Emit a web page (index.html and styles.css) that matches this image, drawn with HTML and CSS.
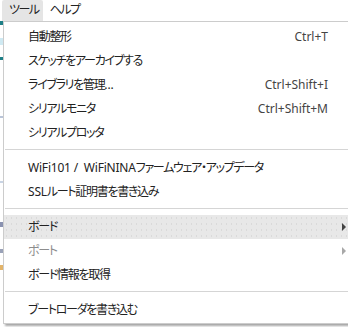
FILE: index.html
```html
<!DOCTYPE html>
<html lang="ja">
<head>
    <meta charset="UTF-8">
    <meta name="viewport" content="width=device-width, initial-scale=1.0">
    <title>ツール</title>
    <link rel="stylesheet" href="styles.css">
</head>
<body>
    <div id="menubar">
        <div class="bar-item active">ツール</div>
        <div class="bar-item">ヘルプ</div>
    </div>
    <div id="workspace">
        <div id="editor-edge"></div>
        <div id="menu">
            <div class="item"><span class="label">自動整形</span><span class="key">Ctrl+T</span><span class="sub"></span></div>
            <div class="item"><span class="label">スケッチをアーカイブする</span><span class="key"></span><span class="sub"></span></div>
            <div class="item"><span class="label">ライブラリを管理<span class="latin">...</span></span><span class="key">Ctrl+Shift+I</span><span class="sub"></span></div>
            <div class="item"><span class="label">シリアルモニタ</span><span class="key">Ctrl+Shift+M</span><span class="sub"></span></div>
            <div class="item"><span class="label">シリアルプロッタ</span><span class="key"></span><span class="sub"></span></div>
            <div class="sep"></div>
            <div class="item"><span class="label"><span class="latin">WiFi101 /  WiFiNINA</span>ファームウェア・アップデータ</span><span class="key"></span><span class="sub"></span></div>
            <div class="item"><span class="label"><span class="latin">SSL</span>ルート証明書を書き込み</span><span class="key"></span><span class="sub"></span></div>
            <div class="sep"></div>
            <div class="item hover"><span class="label">ボード</span><span class="key"></span><span class="sub"><i class="arrow"></i></span></div>
            <div class="item disabled"><span class="label">ポート</span><span class="key"></span><span class="sub"><i class="arrow"></i></span></div>
            <div class="item"><span class="label">ボード情報を取得</span><span class="key"></span><span class="sub"></span></div>
            <div class="sep"></div>
            <div class="item"><span class="label">ブートローダを書き込む</span><span class="key"></span><span class="sub"></span></div>
        </div>
    </div>
</body>
</html>
```
FILE: styles.css
```css
html, body {
    margin: 0;
    padding: 0;
}
body {
    width: 348px;
    height: 327px;
    overflow: hidden;
    background-color: #fff;
    font-family: 'Noto Sans', 'Noto Sans CJK JP', sans-serif;
    font-size: 12px;
    font-feature-settings: "palt";
    color: #222;
}
#menubar {
    display: flex;
    height: 21px;
    padding-left: 2px;
    background-color: #fff;
}
.bar-item {
    height: 21px;
    line-height: 20px;
    padding: 0 4px 0 7px;
    letter-spacing: -1.5px;
    color: #222;
}
.bar-item.active {
    background-color: #e5e5e5;
    border-radius: 2px 2px 0 0;
}
#workspace {
    display: flex;
    align-items: flex-start;
}
#editor-edge {
    width: 3px;
    height: 306px;
    flex: none;
    background:
        linear-gradient(#1e7f86, #1e7f86) 0 0 / 3px 4px no-repeat,
        linear-gradient(#cfe9f2, #cfe9f2) 0 17px / 3px 7px no-repeat,
        linear-gradient(#1e7f86, #1e7f86) 0 36px / 3px 3px no-repeat,
        linear-gradient(#b9c4d8, #b9c4d8) 0 95px / 3px 2px no-repeat,
        linear-gradient(#c9d4e4, #c9d4e4) 0 160px / 3px 2px no-repeat,
        linear-gradient(#8a92b0, #8a92b0) 0 201px / 3px 5px no-repeat,
        linear-gradient(#9aa2b8, #9aa2b8) 0 228px / 3px 4px no-repeat,
        linear-gradient(#e3b46a, #e3b46a) 0 244px / 3px 5px no-repeat,
        #fff;
}
#menu {
    box-sizing: border-box;
    width: 380px;
    flex: none;
    background-color: #fff;
    border: 1px solid #cccccc;
    padding: 3px 0 1px 0;
    box-shadow: 2px 2px 2px rgba(0, 0, 0, 0.35);
}
.item {
    display: flex;
    align-items: center;
    height: 24px;
    line-height: 24px;
    padding-left: 24px;
    white-space: pre;
}
.item .label {
    flex: 1;
    letter-spacing: -1.3px;
}
.item .label .latin {
    letter-spacing: -0.2px;
}
.item .key {
    color: #444;
}
.item .sub {
    width: 54px;
    flex: none;
    display: flex;
    align-items: center;
}
.arrow {
    display: block;
    margin-left: 14px;
    width: 0;
    height: 0;
    border-top: 4px solid transparent;
    border-bottom: 4px solid transparent;
    border-left: 4px solid #444;
}
.item.hover {
    background-color: #e8e8e8;
    background-image: radial-gradient(circle, #dadada 0.6px, transparent 0.8px);
    background-size: 5px 6px;
}
.item.disabled {
    color: #8d8d8d;
}
.item.disabled .arrow {
    border-left-color: #a8a8a8;
}
.sep {
    height: 1px;
    margin: 4px 0 6px 1px;
    background-color: #d5d5d5;
}
```
